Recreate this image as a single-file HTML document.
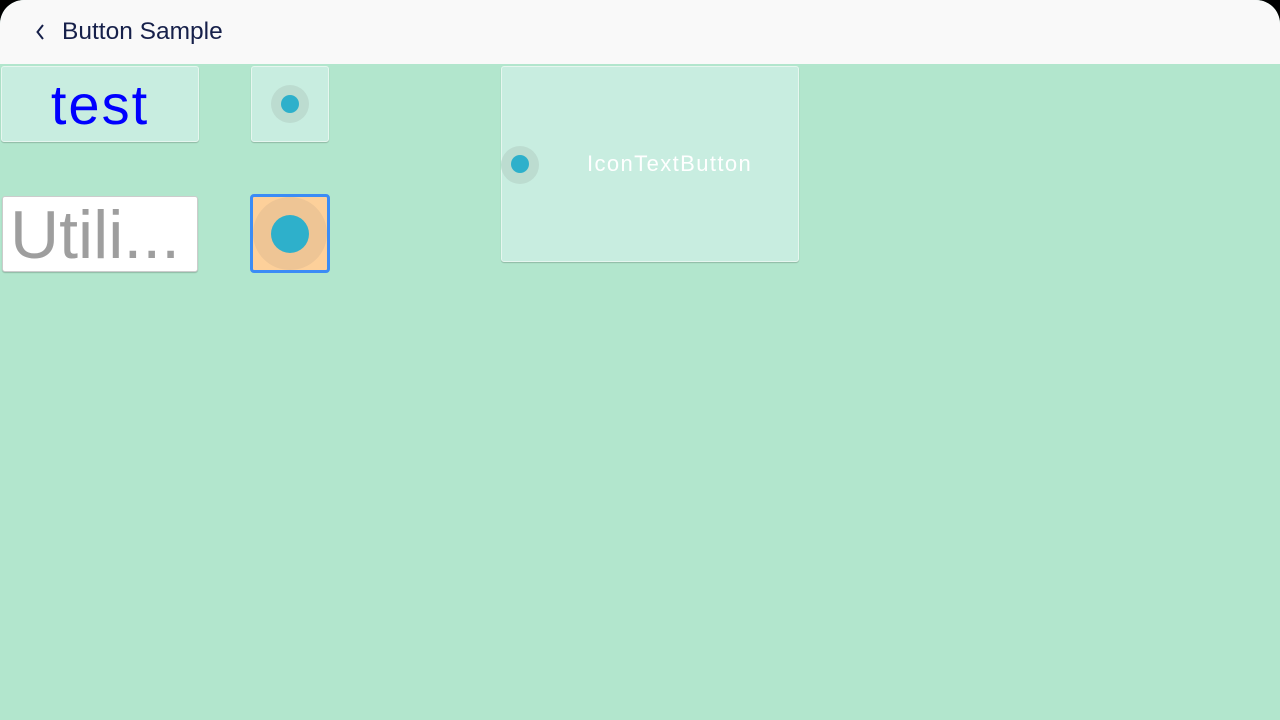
<!DOCTYPE html>
<html><head><meta charset="utf-8"><style>
*{margin:0;padding:0;box-sizing:border-box}
body{width:1280px;height:720px;background:#000;overflow:hidden;font-family:"Liberation Sans","DejaVu Sans",sans-serif;position:relative}
.bg{position:absolute;left:0;top:0;width:1280px;height:720px;background:#b2e6cd;border-radius:24px 24px 0 0;overflow:hidden}
.hdr{position:absolute;left:0;top:0;width:1280px;height:64px;background:#f9f9f9}
.title{position:absolute;left:62px;top:17px;font-size:24.5px;color:#16204a;line-height:30px}
.btn{position:absolute;background:#c8ede0;border:1px solid #e6f6ef;border-radius:3px;box-shadow:0 1px 1px rgba(0,0,0,.2)}
.dot{position:absolute;border-radius:50%}
</style></head><body>
<div class="bg">
<div class="hdr">
<svg style="position:absolute;left:32px;top:22px" width="16" height="20" viewBox="0 0 16 20"><path d="M11 3 L5.5 10 L11 17" stroke="#16204a" stroke-width="2" fill="none"/></svg>
<div class="title">Button Sample</div>
</div>
<div class="btn" style="left:1px;top:66px;width:198px;height:76px"><div style="position:absolute;left:0;right:0;top:8px;text-align:center;font-size:56px;letter-spacing:2px;color:#0000ff;line-height:60px">test</div></div>
<div class="btn" style="left:251px;top:66px;width:78px;height:76px">
<div class="dot" style="left:19px;top:18px;width:38px;height:38px;background:#bcdcd0"></div>
<div class="dot" style="left:29px;top:28px;width:18px;height:18px;background:#2eb0cb"></div></div>
<div class="btn" style="left:2px;top:196px;width:196px;height:76px;background:#fff;border-color:#ccc;overflow:hidden"><div style="position:absolute;left:7px;top:2px;font-size:68px;color:#9e9e9e;line-height:72px;white-space:nowrap">Utili...</div></div>
<div style="position:absolute;left:250px;top:194px;width:80px;height:79px;border:3px solid #3b8cf5;border-radius:4px;background:#fdd09a">
<div class="dot" style="left:0px;top:0px;width:74px;height:73px;background:#eec595"></div>
<div class="dot" style="left:18px;top:18px;width:38px;height:38px;background:#2eb0cb"></div></div>
<div class="btn" style="left:501px;top:66px;width:298px;height:196px">
<div class="dot" style="left:-1px;top:79px;width:38px;height:38px;background:#bcdcd0"></div>
<div class="dot" style="left:9px;top:88px;width:18px;height:18px;background:#2eb0cb"></div>
<div style="position:absolute;left:85px;top:84px;font-size:22px;letter-spacing:1.4px;color:#fff">IconTextButton</div></div>
</div>
</body></html>
